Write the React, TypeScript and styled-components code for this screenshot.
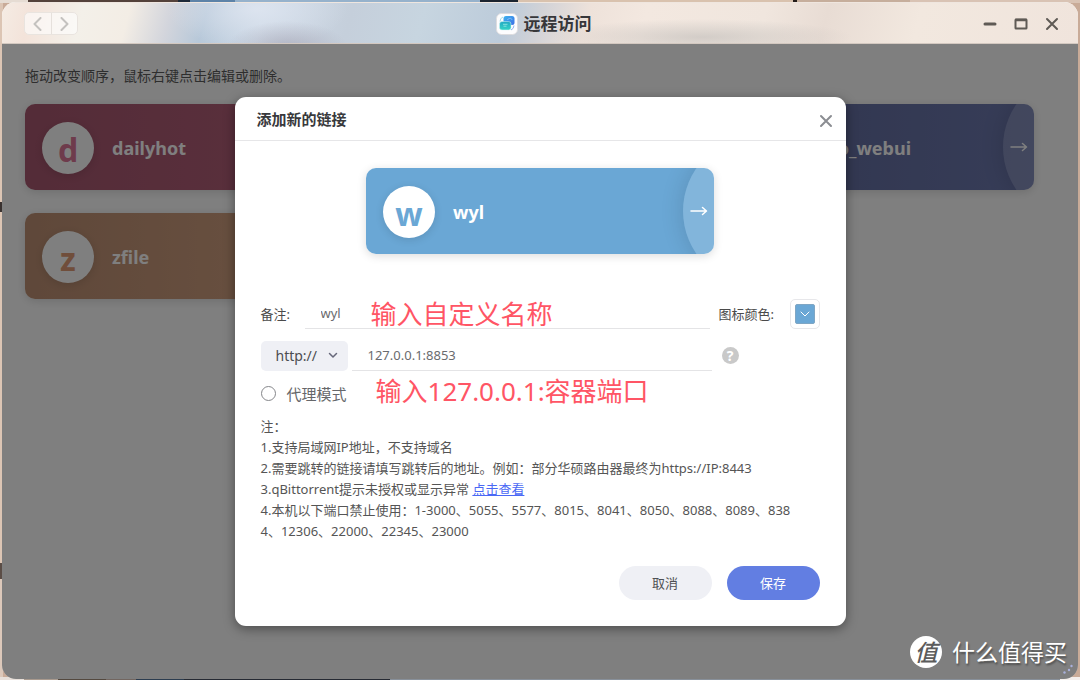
import React, { useState } from "react";
import styled, { createGlobalStyle } from "styled-components";

const GlobalStyle = createGlobalStyle`
  *, *::before, *::after { box-sizing: border-box; }
  body {
    margin: 0;
    font-family: "Noto Sans", "Noto Sans CJK SC", sans-serif;
    font-size: 13px;
    color: #4a4a4a;
  }
  button, input, select { font: inherit; color: inherit; margin: 0; }
  button { cursor: pointer; }
`;

const Desktop = styled.div`
  display: flex;
  min-height: 100vh;
  padding: 2px 2px 1px;
  background:
    linear-gradient(90deg, #e6dcd3 0 28px, #54423b 28px 178px, #1d2a3a 178px 190px, #5d83a8 190px 235px, #96b2cc 235px 480px, #1b2430 480px 518px, #d9c2ae 518px 793px, #231c1a 793px 797px, #c6ae9c 797px 910px, #d9c3b4 910px) top / 100% 3px no-repeat,
    linear-gradient(90deg, #e8e0da 0 24px, #a99a8e 24px 58px, #54493f 58px 106px, #726660 106px 136px, #2c3d50 136px 184px, #262a33 184px 390px, #88909a 390px 1060px, #f4efec 1060px) bottom / 100% 3px no-repeat,
    linear-gradient(180deg, #dcc5b4 0 202px, #3a3230 202px 212px, #dcc5b4 212px 563px, #5b4d46 563px 579px, #dcc8ba 579px) left / 3px 100% no-repeat,
    #c9ab98;
`;

const Window = styled.div`
  position: relative;
  flex: 1;
  display: flex;
  flex-direction: column;
  min-width: 0;
  overflow: hidden;
  border-radius: 14px;
  background: #fff;
`;

const TitleBar = styled.header`
  display: grid;
  grid-template-columns: 1fr auto 1fr;
  align-items: center;
  height: 42px;
  padding: 1px 15px 0 22px;
  border-top: 1px solid #efe6df;
  border-bottom: 1px solid #d3c8c0;
  background:
    radial-gradient(ellipse 60px 26px at 285px 44px, rgba(168, 167, 182, 0.7), transparent),
    radial-gradient(ellipse 90px 40px at 255px 6px, rgba(222, 229, 240, 0.9), transparent),
    radial-gradient(ellipse 150px 18px at 700px 34px, rgba(190, 187, 184, 0.6), transparent),
    linear-gradient(105deg, #f5ece4 0, #f3e3da 30px, #f3f0e9 80px, #f3ede5 125px, #d3d5dc 165px, #b7c8d9 200px, #cdd9e6 255px, #c5cfdb 340px, #c7d5e0 410px, #bccbda 490px, #d3d3d7 525px, #eee2da 570px, #f3e8e0 625px, #f0e6de 740px, #e8dcd4 800px, #f2e8df 890px, #f0e4dc 100%);
`;

const NavGroup = styled.div`
  display: flex;
  width: 54px;
  height: 23px;
  border: 1px solid #e9e4df;
  border-radius: 5px;
  background: rgba(255, 255, 255, 0.6);
`;

const NavButton = styled.button`
  flex: 1;
  display: grid;
  place-items: center;
  padding: 0;
  border: 0;
  background: none;
  color: #c4c2bf;
  & + & { border-left: 1px solid #e6e1dc; }
`;

const AppTitle = styled.h1`
  display: flex;
  align-items: center;
  gap: 6px;
  margin: 0;
  font-size: 17px;
  line-height: 24px;
  font-weight: 700;
  color: #37373a;
`;

const WindowControls = styled.div`
  display: flex;
  justify-content: flex-end;
  gap: 9px;
`;

const ControlButton = styled.button`
  display: grid;
  place-items: center;
  width: 22px;
  height: 22px;
  padding: 0;
  border: 0;
  background: none;
  color: #5f5a55;
`;

const Content = styled.main`
  position: relative;
  flex: 1;
  padding: 22px 44px 22px 23px;
`;

const Hint = styled.p`
  margin: 0 0 18px;
  font-size: 14px;
  line-height: 20px;
  color: #5c5c5c;
`;

const CardGrid = styled.div`
  display: grid;
  grid-template-columns: repeat(3, minmax(0, 1fr));
  gap: 23px;
`;

const Card = styled.div<{ $from: string; $to: string }>`
  position: relative;
  display: flex;
  align-items: center;
  gap: 18px;
  height: 86px;
  padding: 1px 17px 0;
  overflow: hidden;
  border-radius: 10px;
  background: linear-gradient(90deg, ${(p) => p.$from}, ${(p) => p.$to});
`;

const CardShadow = styled.div`
  border-radius: 10px;
  box-shadow: 0 2px 10px rgba(0, 0, 0, 0.14);
`;

const Avatar = styled.span<{ $color: string }>`
  flex: none;
  display: grid;
  place-items: center;
  width: 52px;
  height: 52px;
  padding-top: 4px;
  border-radius: 50%;
  background: #fff;
  box-shadow: 0 2px 8px rgba(0, 0, 0, 0.12);
  color: ${(p) => p.$color};
  font-size: 32px;
  line-height: 44px;
  font-weight: 700;
`;

const CardName = styled.span`
  font-size: 18px;
  line-height: 26px;
  font-weight: 700;
  color: #fff;
  white-space: nowrap;
`;

const ArrowDisc = styled.span`
  position: absolute;
  top: -32px;
  right: -119px;
  display: flex;
  align-items: center;
  width: 150px;
  height: 150px;
  padding-left: 7px;
  border-radius: 50%;
  background: rgba(255, 255, 255, 0.16);
  box-shadow: -2px 0 22px rgba(0, 0, 0, 0.12);
  color: #fff;
`;

const Overlay = styled.div`
  position: absolute;
  inset: 0;
  display: grid;
  place-items: center;
  background: rgba(0, 0, 0, 0.5);
`;

const Dialog = styled.section`
  width: 611px;
  max-width: 100%;
  border-radius: 11px;
  background: #fff;
  box-shadow: 0 3px 12px rgba(0, 0, 0, 0.4);
`;

const DialogHeader = styled.header`
  display: flex;
  align-items: center;
  justify-content: space-between;
  height: 44px;
  padding: 1px 12px 0 22px;
  border-bottom: 1px solid #e6e6e8;
`;

const DialogTitle = styled.h2`
  margin: 0;
  font-size: 15px;
  line-height: 22px;
  font-weight: 700;
  color: #38393c;
`;

const CloseButton = styled(ControlButton)`
  width: 16px;
  margin-top: 4px;
  color: #8b8d92;
`;

const Form = styled.form`
  display: flex;
  flex-direction: column;
  gap: 11px;
  padding: 27px 26px 26px;
`;

const Preview = styled.div`
  width: 348px;
  max-width: 100%;
  margin: 0 auto 33px;
`;

const Row = styled.div`
  position: relative;
  display: flex;
  align-items: center;
  height: 31px;
`;

const NoteLabel = styled.label`
  width: 44px;
`;

const TextInput = styled.input`
  flex: 1;
  min-width: 0;
  height: 31px;
  padding: 0 16px;
  border: 0;
  border-bottom: 1px solid #e4e4e6;
  outline: 0;
  background: none;
  color: #6a6b6e;
`;

const ColorField = styled.div`
  display: flex;
  align-items: center;
  justify-content: space-between;
  width: 101px;
  margin-left: 9px;
`;

const ColorButton = styled.button`
  display: grid;
  place-items: center;
  width: 30px;
  height: 30px;
  padding: 0;
  border: 1px solid #e7e7ea;
  border-radius: 5px;
  background: #fff;
`;

const Swatch = styled.span`
  display: grid;
  place-items: center;
  width: 20px;
  height: 20px;
  border: 1px solid #7fa6c4;
  border-radius: 2px;
  background: #6aa7d5;
  color: #fff;
`;

const SelectBox = styled.div`
  position: relative;
  width: 87px;
  margin-right: 4px;
  svg {
    position: absolute;
    top: 11px;
    right: 10px;
    pointer-events: none;
    color: #66677a;
  }
`;

const ProtocolSelect = styled.select`
  display: block;
  width: 100%;
  height: 30px;
  padding: 0 15px;
  border: 0;
  border-radius: 5px;
  appearance: none;
  background: #eff0f5;
  font-size: 14px;
  color: #4c4d50;
`;

const HelpButton = styled.button`
  display: grid;
  place-items: center;
  width: 17px;
  height: 17px;
  margin: 0 81px 0 10px;
  padding: 0;
  border: 0;
  border-radius: 50%;
  background: #c9c9c9;
  color: #fff;
  font-size: 14px;
  line-height: 17px;
  font-weight: 700;
`;

const ProxyRow = styled.div`
  display: flex;
  align-items: center;
  gap: 29px;
  height: 22px;
  margin-bottom: 1px;
`;

const RadioLabel = styled.label`
  display: flex;
  align-items: center;
  gap: 11px;
  font-size: 15px;
  color: #66676a;
`;

const Radio = styled.input`
  appearance: none;
  width: 15px;
  height: 15px;
  margin: 0;
  border: 1px solid #85868a;
  border-radius: 50%;
  background: #fff;
  &:checked { border: 5px solid #627ee2; }
`;

const Annotation = styled.span<{ $floating?: boolean }>`
  ${(p) => (p.$floating ? "position: absolute; left: 110px; top: -3px;" : "padding-bottom: 4px;")}
  font-size: 26px;
  line-height: 38px;
  color: #ff5565;
  white-space: nowrap;
  pointer-events: none;
`;

const Notes = styled.div`
  line-height: 21px;
  color: #555;
  p { margin: 0; }
  a { color: #4a68f5; text-decoration: underline; }
`;

const Actions = styled.div`
  display: flex;
  justify-content: flex-end;
  gap: 15px;
  margin-top: 13px;
`;

const ActionButton = styled.button<{ $primary?: boolean }>`
  width: 93px;
  height: 34px;
  padding: 0 0 2px;
  border: 0;
  border-radius: 17px;
  background: ${(p) => (p.$primary ? "#627ee2" : "#eff0f5")};
  color: ${(p) => (p.$primary ? "#fff" : "#4f5054")};
`;

const Watermark = styled.div`
  position: absolute;
  right: 11px;
  bottom: 11px;
  display: flex;
  align-items: center;
  gap: 10px;
  font-size: 23px;
  line-height: 32px;
  color: #fff;
  text-shadow: 1px 2px 2px rgba(0, 0, 0, 0.4);
`;

const WatermarkBadge = styled.span`
  display: grid;
  place-items: center;
  width: 32px;
  height: 32px;
  border-radius: 50%;
  background: #fff;
  color: #5c5c5c;
  font-style: italic;
  font-weight: 500;
  text-shadow: none;
`;

const ResizeGrip = styled.svg`
  position: absolute;
  right: 4px;
  bottom: 3px;
`;

function Stroke({ d, w, h, sw = 1 }: { d: string; w: number; h: number; sw?: number }) {
  return (
    <svg width={w} height={h} viewBox={`0 0 ${w} ${h}`} fill="none" stroke="currentColor"
      strokeWidth={sw} strokeLinecap="round" strokeLinejoin="round" aria-hidden="true">
      <path d={d} />
    </svg>
  );
}

function AppLogo() {
  return (
    <svg width="22" height="22" viewBox="0 0 22 22" aria-hidden="true">
      <defs>
        <linearGradient id="back" x1="0" y1="0" x2="1" y2="1">
          <stop offset="0" stopColor="#3fb4ee" />
          <stop offset="1" stopColor="#3b6fe6" />
        </linearGradient>
        <linearGradient id="front" x1="0" y1="0" x2="0" y2="1">
          <stop offset="0" stopColor="#22a9c4" />
          <stop offset="1" stopColor="#35d3c6" />
        </linearGradient>
      </defs>
      <rect x="0.5" y="0.5" width="21" height="21" rx="5" fill="#fdfdfe" stroke="#dddcde" />
      <rect x="7.500" y="3" width="11" height="9" rx="2.5" fill="url(#back)" />
      <path d="M11.500 7a1.300 1.300 0 0 1 1.500-1.200 1.800 1.800 0 0 1 3 1" stroke="#8cc8f8" strokeWidth="0.800" fill="none" />
      <path d="M4 8.500Q4 5 7 4" stroke="#9ddfe8" fill="none" />
      <path d="M18 12.500Q17.700 16 15 17" stroke="#8eb4f0" fill="none" />
      <rect x="3.500" y="8.500" width="11.500" height="8.500" rx="2.500" fill="url(#front)" stroke="#d8f5f5" strokeWidth="0.500" />
      <path d="M7 11.300h4.500M7.500 13.200h3" stroke="#8ee6e2" strokeWidth="0.900" />
    </svg>
  );
}

function LinkCard({ name, from, to, ink }: { name: string; from: string; to: string; ink: string }) {
  return (
    <CardShadow>
      <Card $from={from} $to={to}>
        <Avatar $color={ink}>{name[0]}</Avatar>
        <CardName>{name}</CardName>
        <ArrowDisc>
          <Stroke w={18} h={10} sw={1.5} d="M1 5h15M12.500 1.500L16.500 5l-4 3.500" />
        </ArrowDisc>
      </Card>
    </CardShadow>
  );
}

export default function App() {
  const [note, setNote] = useState("wyl");
  const [address, setAddress] = useState("127.0.0.1:8853");

  return (
    <>
      <GlobalStyle />
      <Desktop lang="zh-CN">
        <Window>
          <TitleBar>
            <NavGroup>
              <NavButton aria-label="后退"><Stroke w={9} h={14} sw={2} d="M7.500 1L1.500 7l6 6" /></NavButton>
              <NavButton aria-label="前进"><Stroke w={9} h={14} sw={2} d="M1.500 1l6 6-6 6" /></NavButton>
            </NavGroup>
            <AppTitle><AppLogo />远程访问</AppTitle>
            <WindowControls>
              <ControlButton aria-label="最小化"><Stroke w={14} h={14} sw={3} d="M2 7h10" /></ControlButton>
              <ControlButton aria-label="最大化">
                <svg width="14" height="12" viewBox="0 0 14 12" fill="none" stroke="currentColor" aria-hidden="true">
                  <rect x="1.500" y="1.500" width="11" height="9" rx="0.500" strokeWidth="2" />
                  <path d="M1 2h12" strokeWidth="2.500" />
                </svg>
              </ControlButton>
              <ControlButton aria-label="关闭"><Stroke w={14} h={14} sw={2} d="M2 2l10 10M12 2L2 12" /></ControlButton>
            </WindowControls>
          </TitleBar>
          <Content>
            <Hint>拖动改变顺序，鼠标右键点击编辑或删除。</Hint>
            <CardGrid>
              <LinkCard name="dailyhot" from="#a85870" to="#b8627c" ink="#dc7698" />
              <LinkCard name="qbittorrent" from="#5c9c9c" to="#66acac" ink="#5c9c9c" />
              <LinkCard name="video_webui" from="#606a9c" to="#6e7ab0" ink="#606a9c" />
              <LinkCard name="zfile" from="#be9074" to="#d8a684" ink="#e09c76" />
            </CardGrid>
            <Overlay>
              <Dialog role="dialog" aria-labelledby="dialog-title">
                <DialogHeader>
                  <DialogTitle id="dialog-title">添加新的链接</DialogTitle>
                  <CloseButton aria-label="关闭对话框"><Stroke w={14} h={14} sw={2} d="M2 2l10 10M12 2L2 12" /></CloseButton>
                </DialogHeader>
                <Form onSubmit={(e) => e.preventDefault()}>
                  <Preview>
                    <LinkCard name={note} from="#6aa7d5" to="#6aa7d5" ink="#6aa7d5" />
                  </Preview>
                  <Row>
                    <NoteLabel htmlFor="note">备注:</NoteLabel>
                    <TextInput id="note" value={note} onChange={(e) => setNote(e.target.value)} />
                    <Annotation $floating>输入自定义名称</Annotation>
                    <ColorField>
                      <label htmlFor="color">图标颜色:</label>
                      <ColorButton id="color" type="button">
                        <Swatch><Stroke w={10} h={6} d="M1 1l4 4 4-4" /></Swatch>
                      </ColorButton>
                    </ColorField>
                  </Row>
                  <Row>
                    <SelectBox>
                      <ProtocolSelect aria-label="协议" defaultValue="http">
                        <option value="http">http://</option>
                        <option value="https">https://</option>
                      </ProtocolSelect>
                      <Stroke w={10} h={7} sw={1.5} d="M1.500 1.500L5 5l3.500-3.500" />
                    </SelectBox>
                    <TextInput aria-label="地址" value={address} onChange={(e) => setAddress(e.target.value)} />
                    <HelpButton type="button" aria-label="帮助">?</HelpButton>
                  </Row>
                  <ProxyRow>
                    <RadioLabel><Radio type="radio" name="mode" />代理模式</RadioLabel>
                    <Annotation>输入127.0.0.1:容器端口</Annotation>
                  </ProxyRow>
                  <Notes>
                    <p>注：</p>
                    <p>1.支持局域网IP地址，不支持域名</p>
                    <p>2.需要跳转的链接请填写跳转后的地址。例如：部分华硕路由器最终为https://IP:8443</p>
                    <p>3.qBittorrent提示未授权或显示异常 <a href="#help">点击查看</a></p>
                    <p>4.本机以下端口禁止使用：1-3000、5055、5577、8015、8041、8050、8088、8089、838<br />4、12306、22000、22345、23000</p>
                  </Notes>
                  <Actions>
                    <ActionButton type="button">取消</ActionButton>
                    <ActionButton type="submit" $primary>保存</ActionButton>
                  </Actions>
                </Form>
              </Dialog>
            </Overlay>
          </Content>
          <Watermark>
            <WatermarkBadge>值</WatermarkBadge>
            什么值得买
          </Watermark>
          <ResizeGrip width="12" height="12" viewBox="0 0 12 12" fill="#a9b0dc" aria-hidden="true">
            <circle cx="9.500" cy="2" r="1.200" />
            <circle cx="7" cy="6" r="1.200" />
            <circle cx="2.500" cy="8.500" r="1.200" />
          </ResizeGrip>
        </Window>
      </Desktop>
    </>
  );
}
